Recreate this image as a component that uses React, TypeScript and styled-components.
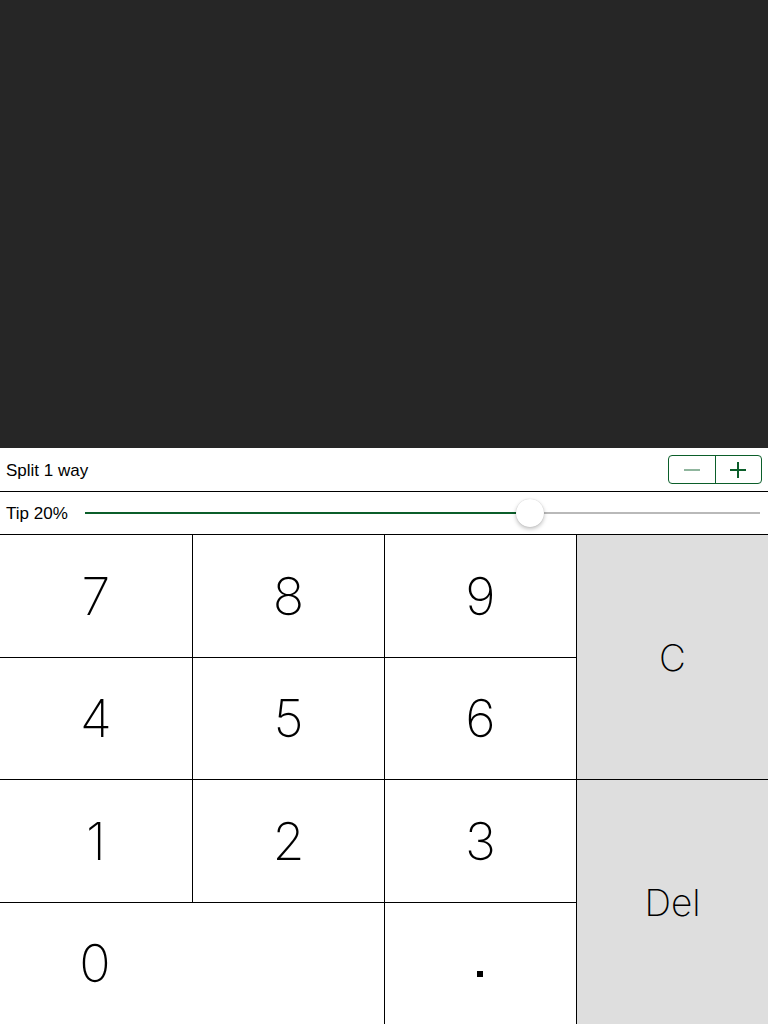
import styled, { createGlobalStyle } from 'styled-components';

const GlobalStyle = createGlobalStyle`
  html, body {
    margin: 0;
    padding: 0;
    background: #ffffff;
  }
  body {
    font-family: "Liberation Sans", Arial, sans-serif;
    color: #000;
  }
`;

const Screen = styled.div`
  width: 768px;
  height: 1024px;
  display: flex;
  flex-direction: column;
  overflow: hidden;
`;

const Display = styled.div`
  height: 448px;
  background: #262626;
`;

const OptionRow = styled.div<{ $height: number }>`
  height: ${(p) => p.$height}px;
  display: flex;
  align-items: center;
  padding: 0 6px;
  border-bottom: 1px solid #000;
  font-size: 17px;
  box-sizing: content-box;
`;

const Label = styled.span`
  flex: 1;
  white-space: nowrap;
  padding-top: 2px;
`;

const Stepper = styled.div`
  display: flex;
  width: 94px;
  height: 29px;
  box-sizing: border-box;
  border: 1px solid #0b5e2a;
  border-radius: 4px;
`;

const StepButton = styled.div<{ $disabled?: boolean }>`
  flex: 1;
  display: flex;
  align-items: center;
  justify-content: center;
  opacity: ${(p) => (p.$disabled ? 0.45 : 1)};
  & + & {
    border-left: 1px solid #0b5e2a;
  }
`;

const TipLabel = styled.span`
  white-space: nowrap;
  margin-right: 17px;
  padding-top: 2px;
`;

const Slider = styled.div`
  flex: 1;
  height: 28px;
  display: flex;
  align-items: center;
  margin-right: 2px;
`;

const Track = styled.div<{ $active?: boolean }>`
  height: 2px;
  background: ${(p) => (p.$active ? '#0b5e2a' : '#b9b9b9')};
`;

const Thumb = styled.div`
  width: 28px;
  height: 28px;
  margin: 0 -14px;
  border-radius: 50%;
  background: #fff;
  box-shadow: 0 2px 4px rgba(0, 0, 0, 0.25), 0 0 1px rgba(0, 0, 0, 0.2);
  position: relative;
  z-index: 1;
`;

const Keypad = styled.div`
  flex: 1;
  display: grid;
  grid-template-columns: 192px 191px 191px 1fr;
  grid-template-rows: 122px 121px 122px 121px;
  gap: 1px;
  background: #000;
`;

const Key = styled.div<{ $gray?: boolean; $span?: number; $rows?: number; $small?: boolean; $leftHalf?: boolean }>`
  display: flex;
  align-items: center;
  justify-content: center;
  background: ${(p) => (p.$gray ? '#dedede' : '#fff')};
  grid-column: span ${(p) => p.$span ?? 1};
  grid-row: span ${(p) => p.$rows ?? 1};
  font-family: Inter, Roboto, "Liberation Sans", sans-serif;
  font-weight: 160;
  font-size: ${(p) => (p.$small ? 37 : 52)}px;
  padding-right: ${(p) => (p.$leftHalf ? 194 : 0)}px;
`;

const Dot = styled.span`
  width: 6px;
  height: 6px;
  background: #000;
  margin-top: 20px;
  margin-left: -2px;
`;

const digits = ['7', '8', '9'];

export default function App() {
  const tip = 20;
  const pct = 0.66;
  return (
    <Screen>
      <GlobalStyle />
      <Display />
      <OptionRow $height={43}>
        <Label>Split 1 way</Label>
        <Stepper>
          <StepButton $disabled>
            <svg width="16" height="16" viewBox="0 0 16 16">
              <path d="M0 8h16" stroke="#0b5e2a" strokeWidth="2" />
            </svg>
          </StepButton>
          <StepButton>
            <svg width="16" height="16" viewBox="0 0 16 16">
              <path d="M0 8h16M8 0v16" stroke="#0b5e2a" strokeWidth="2" />
            </svg>
          </StepButton>
        </Stepper>
      </OptionRow>
      <OptionRow $height={42}>
        <TipLabel>Tip {tip}%</TipLabel>
        <Slider>
          <Track $active style={{ width: `${pct * 100}%` }} />
          <Thumb />
          <Track style={{ flex: 1 }} />
        </Slider>
      </OptionRow>
      <Keypad>
        {digits.map((d) => (
          <Key key={d}>{d}</Key>
        ))}
        <Key $gray $rows={2} $small>C</Key>
        <Key>4</Key>
        <Key>5</Key>
        <Key>6</Key>
        <Key>1</Key>
        <Key>2</Key>
        <Key>3</Key>
        <Key $gray $rows={2} $small>Del</Key>
        <Key $span={2} $leftHalf>0</Key>
        <Key>
          <Dot />
        </Key>
      </Keypad>
    </Screen>
  );
}
